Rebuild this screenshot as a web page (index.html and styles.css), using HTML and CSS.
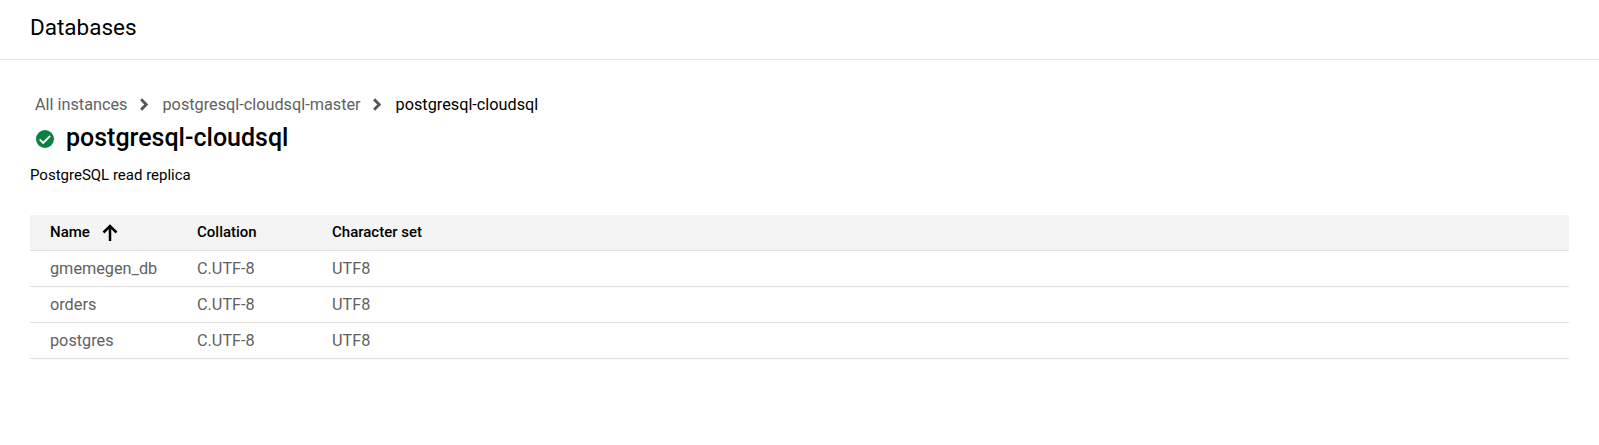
FILE: index.html
```html
<!DOCTYPE html>
<html lang="en">
<head>
<meta charset="utf-8">
<title>Databases</title>
<link rel="stylesheet" href="styles.css">
</head>
<body>
<header class="topbar"><h1>Databases</h1></header>
<main class="content">
  <nav class="breadcrumbs">
    <a class="crumb">All instances</a>
    <svg class="chevron" viewBox="0 0 8 13"><path d="M1.100 1.300 6.200 6.500l-5.100 5.200"/></svg>
    <a class="crumb">postgresql-cloudsql-master</a>
    <svg class="chevron" viewBox="0 0 8 13"><path d="M1.100 1.300 6.200 6.500l-5.100 5.200"/></svg>
    <span class="crumb current">postgresql-cloudsql</span>
  </nav>
  <div class="instance">
    <svg class="status" viewBox="0 0 18 18"><circle cx="9" cy="9" r="9"/><path d="m3.700 9.300 3.500 3.500 7-7"/></svg>
    <h2>postgresql-cloudsql</h2>
  </div>
  <p class="subtitle">PostgreSQL read replica</p>
  <table class="databases">
    <thead><tr><th class="name"><span class="sortable">Name<svg class="sort" viewBox="0 0 16 17"><path d="M8 17V2M1.500 8.500 8 2l6.500 6.500"/></svg></span></th><th class="collation">Collation</th><th>Character set</th></tr></thead>
    <tbody>
      <tr><td>gmemegen_db</td><td>C.UTF-8</td><td>UTF8</td></tr>
      <tr><td>orders</td><td>C.UTF-8</td><td>UTF8</td></tr>
      <tr><td>postgres</td><td>C.UTF-8</td><td>UTF8</td></tr>
    </tbody>
  </table>
</main>
</body>
</html>
```
FILE: styles.css
```css
* { box-sizing: border-box; }
body { margin: 0; background: #fff; color: #000; font-family: Roboto, sans-serif; }
h1, h2, p { margin: 0; }
.topbar { height: 60px; padding: 11px 30px 0; border-bottom: 1px solid #e0e0e0; }
h1 { font-size: 22.5px; line-height: 32px; font-weight: 400; }
.content { padding: 32px 30px 0; }
.breadcrumbs { display: flex; align-items: center; height: 25px; padding: 1px 0 0 5px; font-size: 16.25px; line-height: 24px; }
.crumb { color: #616161; }
.current { color: #000; }
.chevron { width: 8px; height: 13px; margin: 0 15px 1px 12px; fill: none; stroke: #555; stroke-width: 2.8; }
.instance { display: flex; align-items: center; height: 41px; padding-left: 6px; }
.status { width: 18px; height: 18px; margin: 2px 12px 0 0; fill: #0b8043; }
.status path { fill: none; stroke: #fff; stroke-width: 1.9; }
h2 { font-size: 25px; line-height: 32px; font-weight: 500; }
.subtitle { padding-top: 5px; font-size: 15px; line-height: 24px; }
.databases { width: 100%; margin-top: 28px; border-collapse: separate; border-spacing: 0; table-layout: fixed; }
th, td { height: 36px; padding: 0 0 0 20px; border-bottom: 1px solid #e0e0e0; text-align: left; font-size: 16.25px; font-weight: 400; color: #616161; }
th { padding-bottom: 1px; background: #f4f4f4; color: #000; font-size: 15px; line-height: 18px; font-weight: 500; }
.name { width: 147px; }
.collation { width: 135px; }
.sortable { display: flex; align-items: center; }
.sort { width: 16px; height: 17px; margin: 1px 0 0 12px; fill: none; stroke: #000; stroke-width: 2.5; }
```
